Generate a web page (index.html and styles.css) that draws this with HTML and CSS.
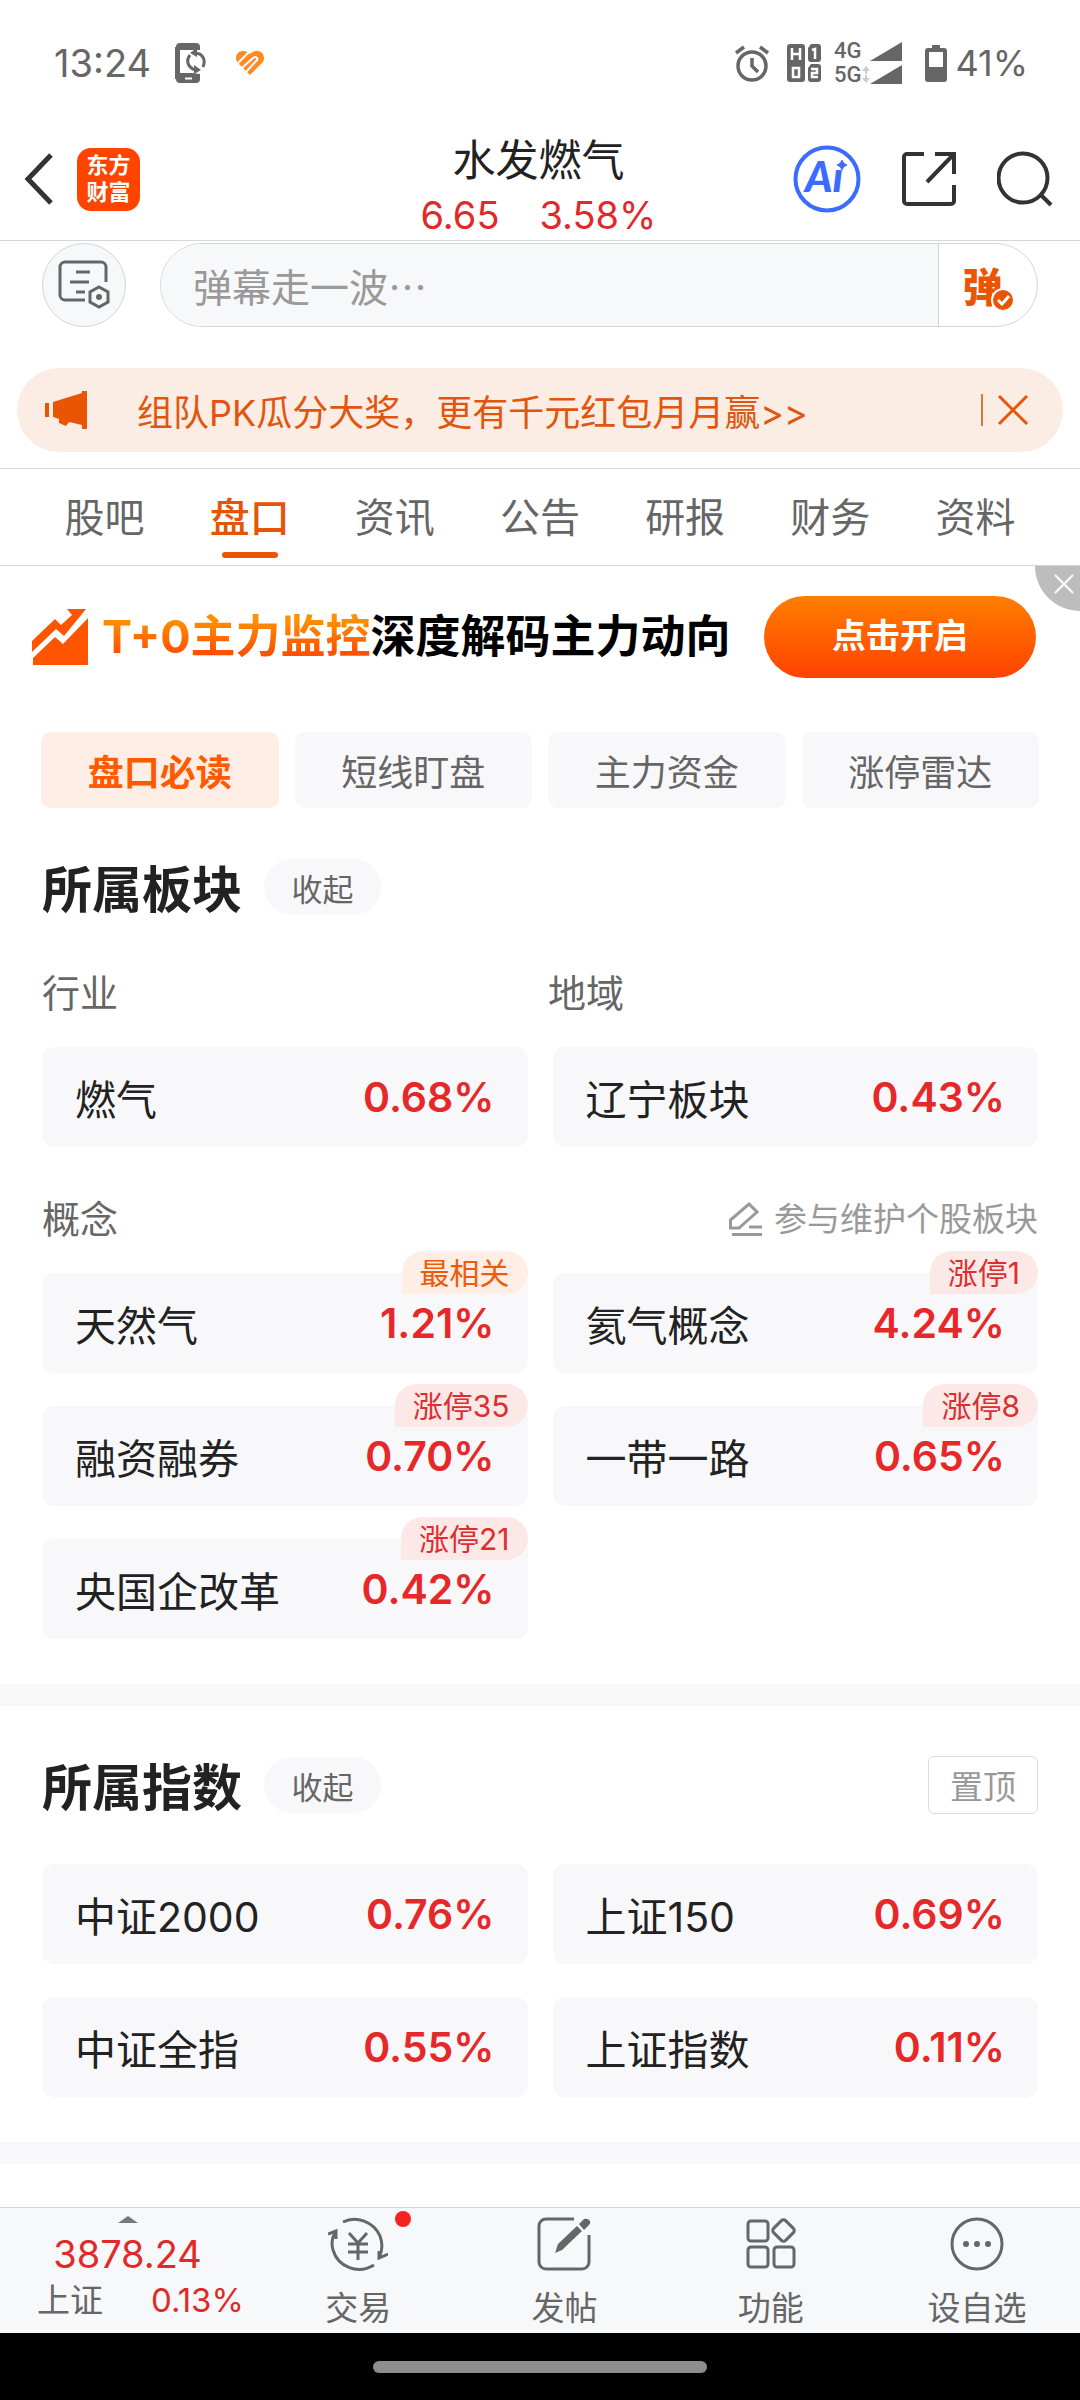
FILE: index.html
```html
<!DOCTYPE html>
<html lang="zh-CN">
<head>
  <meta charset="UTF-8">
  <meta name="viewport" content="width=device-width, initial-scale=1.0">
  <title>水发燃气</title>
  <link rel="stylesheet" href="styles.css">
</head>
<body>

  <div class="status-bar">
    <div class="status-left">
      <span class="clock">13:24</span>
      <svg width="32" height="42" viewBox="0 0 32 42">
        <path d="M5 1h16a4 4 0 0 1 4 4v3H5v23h12l8 1v5a4 4 0 0 1-4 4H5a4 4 0 0 1-4-4V5a4 4 0 0 1 4-4z" fill="#666"/>
        <path d="M1 5v32" stroke="#666" stroke-width="2"/>
        <path d="M10 36.500h7" stroke="#fff" stroke-width="2"/>
        <path d="M15 13c-4 5-3 12 5 15M21 11c7 1 10 7 7 14" fill="none" stroke="#666" stroke-width="3"/>
        <path d="M15 11l7-5v9zM26 28l-7 4v-9z" fill="#666"/>
      </svg>
      <svg class="heart" width="30" height="26" viewBox="0 0 30 26">
        <path d="M15 25L3 13C-1 9 1 1 8 1c3 0 5 1 7 3 2-2 4-3 7-3 7 0 9 8 5 12z" fill="#ff8a24"/>
        <path d="M2 14L15 1M7 18L18 8q3-2 4 0t-1 3L11 22" fill="none" stroke="#fff" stroke-width="2"/>
      </svg>
    </div>
    <div class="status-right">
      <svg width="36" height="38" viewBox="0 0 36 38">
        <circle cx="18" cy="22" r="14" fill="none" stroke="#666" stroke-width="3.500"/>
        <path d="M18 14v8l6 6M2 9l8-6M34 9l-8-6" fill="none" stroke="#666" stroke-width="3.500"/>
      </svg>
      <svg class="hd" width="36" height="40" viewBox="0 0 36 40">
        <rect x="1" y="1" width="18" height="38" rx="3" fill="#666"/>
        <path d="M25 1h7a3 3 0 0 1 3 3v12a3 3 0 0 1-3 3h-7a3 3 0 0 1-3-3V5zM25 21h7a3 3 0 0 1 3 3v12a3 3 0 0 1-3 3h-7a3 3 0 0 1-3-3V25z" fill="#666"/>
        <path d="M6 5v12M14 5v12M6 11h8M7 25h6v9H7zM26 7l3-1v10M25 26h6v4h-5v4h6" fill="none" stroke="#fff" stroke-width="2.500"/>
      </svg>
      <div class="network"><span>4G</span><span>5G</span></div>
      <svg width="42" height="42" viewBox="0 0 42 42">
        <path d="M41 0v19H9zM41 23v19H9z" fill="#666"/>
        <path d="M5 24l-4 5h3v3h2v-3h3zM5 41l-4-5h3v-3h2v3h3z" fill="#ccc"/>
      </svg>
      <svg class="battery" width="22" height="38" viewBox="0 0 22 38">
        <path d="M7 1h8v3h4a3 3 0 0 1 3 3v28a3 3 0 0 1-3 3H3a3 3 0 0 1-3-3V7a3 3 0 0 1 3-3h4z" fill="#666"/>
        <path d="M4 8h14v15H4z" fill="#fff"/>
      </svg>
      <span class="battery-text">41%</span>
    </div>
  </div>

  <header class="header">
    <div class="header-left">
      <button class="icon-button" aria-label="返回">
        <svg width="30" height="52" viewBox="0 0 30 52"><path d="M27 2L4 26l23 24" fill="none" stroke="#333" stroke-width="5"/></svg>
      </button>
      <a class="logo" href="#"><span>东方</span><span>财富</span></a>
    </div>
    <div class="stock">
      <h1>水发燃气</h1>
      <p class="stock-price"><span>6.65</span><span>3.58%</span></p>
    </div>
    <div class="header-right">
      <button class="icon-button" aria-label="智能助手">
        <svg width="68" height="68" viewBox="0 0 68 68">
          <circle cx="34" cy="34" r="31.500" fill="none" stroke="#3b6bff" stroke-width="4"/>
          <text class="ai-text" x="12" y="47">Aı</text>
          <path d="M49 15q1 4 5 5-4 1-5 5-1-4-5-5 4-1 5-5z" fill="#3b6bff" stroke="#3b6bff"/>
        </svg>
      </button>
      <button class="icon-button" aria-label="分享">
        <svg width="56" height="56" viewBox="0 0 56 56">
          <path d="M23 3H6a3 3 0 0 0-3 3v44a3 3 0 0 0 3 3h44a3 3 0 0 0 3-3V34M34 3h19v20M52 4L26 31" fill="none" stroke="#333" stroke-width="4"/>
        </svg>
      </button>
      <button class="icon-button" aria-label="搜索">
        <svg width="56" height="56" viewBox="0 0 56 56">
          <circle cx="26" cy="27" r="24.500" fill="none" stroke="#333" stroke-width="4"/>
          <path d="M43 43l11 11" stroke="#333" stroke-width="4"/>
        </svg>
      </button>
    </div>
  </header>

  <form class="danmu">
    <button type="button" class="danmu-setting" aria-label="弹幕设置">
      <svg width="52" height="50" viewBox="0 0 52 50">
        <path d="M27 40H7a5 5 0 0 1-5-5V7a5 5 0 0 1 5-5h36a5 5 0 0 1 5 5v15" fill="none" stroke="#666" stroke-width="3"/>
        <path d="M18 12h14M12 22h19M18 32h9" stroke="#666" stroke-width="3"/>
        <path d="M41 27l9 5v10l-9 5-9-5V32z" fill="#f7f8fa" stroke="#666" stroke-width="3"/>
        <circle cx="41" cy="37" r="3" fill="#666"/>
      </svg>
    </button>
    <div class="danmu-field">
      <input type="text" aria-label="弹幕" placeholder="弹幕走一波…">
      <button type="button" class="danmu-toggle">弹
        <svg class="danmu-check" width="24" height="24" viewBox="0 0 24 24">
          <circle cx="12" cy="12" r="11" fill="#ea5504" stroke="#fff" stroke-width="2"/>
          <path d="M7 12l4 4 7-8" fill="none" stroke="#fff" stroke-width="3"/>
        </svg>
      </button>
    </div>
  </form>

  <div class="notice">
    <svg width="44" height="38" viewBox="0 0 44 38"><path d="M1 12h4v14H1zM9 11l29-9V0h5v38h-5v-4l-13-3-3 4-7-3v-4l-6-2z" fill="#ea5504"/></svg>
    <a href="#">组队PK瓜分大奖，更有千元红包月月赢&gt;&gt;</a>
    <button class="notice-close" aria-label="关闭">
      <svg width="32" height="32" viewBox="0 0 32 32"><path d="M2 2l28 28M30 2L2 30" stroke="#ea5504" stroke-width="3"/></svg>
    </button>
  </div>

  <nav class="tabs">
    <a href="#">股吧</a>
    <a href="#" class="active">盘口</a>
    <a href="#">资讯</a>
    <a href="#">公告</a>
    <a href="#">研报</a>
    <a href="#">财务</a>
    <a href="#">资料</a>
  </nav>

  <div class="banner">
    <svg width="56" height="56" viewBox="0 0 56 56">
      <path d="M0 32L23 10l6 6 11-10-5-6h19L32 27l-8-7L0 43zM1 56v-7l22-21 8 7L56 9v47z" fill="#ff5500"/>
    </svg>
    <p class="banner-text"><span>T+0主力监控</span>深度解码主力动向</p>
    <a class="banner-button" href="#">点击开启</a>
    <button class="banner-close" aria-label="关闭广告">
      <svg width="20" height="20" viewBox="0 0 20 20"><path d="M1 1l18 18M19 1L1 19" stroke="#fff" stroke-width="2"/></svg>
    </button>
  </div>

  <div class="chips">
    <button class="active">盘口必读</button>
    <button>短线盯盘</button>
    <button>主力资金</button>
    <button>涨停雷达</button>
  </div>

  <section class="section">
    <div class="section-head">
      <h2>所属板块</h2>
      <button class="fold">收起</button>
    </div>
    <div class="labels labels-grid">
      <span>行业</span>
      <span>地域</span>
    </div>
    <div class="cards">
      <a class="card" href="#"><span>燃气</span><b>0.68%</b></a>
      <a class="card" href="#"><span>辽宁板块</span><b>0.43%</b></a>
    </div>
    <div class="labels labels-concept">
      <span>概念</span>
      <a class="maintain" href="#">
        <svg width="34" height="34" viewBox="0 0 34 34">
          <path d="M1.500 26V18L20 2l8 8-18 16zM20 25h13M3 32.500h30" fill="none" stroke="#999" stroke-width="3"/>
        </svg>
        参与维护个股板块
      </a>
    </div>
    <div class="cards">
      <a class="card" href="#"><span>天然气</span><b>1.21%</b><em class="badge related">最相关</em></a>
      <a class="card" href="#"><span>氦气概念</span><b>4.24%</b><em class="badge">涨停1</em></a>
      <a class="card" href="#"><span>融资融券</span><b>0.70%</b><em class="badge">涨停35</em></a>
      <a class="card" href="#"><span>一带一路</span><b>0.65%</b><em class="badge">涨停8</em></a>
      <a class="card" href="#"><span>央国企改革</span><b>0.42%</b><em class="badge">涨停21</em></a>
    </div>
  </section>

  <section class="section">
    <div class="section-head index-head">
      <h2>所属指数</h2>
      <button class="fold">收起</button>
      <button class="pin">置顶</button>
    </div>
    <div class="cards">
      <a class="card" href="#"><span>中证2000</span><b>0.76%</b></a>
      <a class="card" href="#"><span>上证150</span><b>0.69%</b></a>
      <a class="card" href="#"><span>中证全指</span><b>0.55%</b></a>
      <a class="card" href="#"><span>上证指数</span><b>0.11%</b></a>
    </div>
  </section>

  <footer class="bottom-bar">
    <a class="index-quote" href="#">
      <svg width="20" height="7" viewBox="0 0 20 7"><path d="M0 7L10 0l10 7z" fill="#77787d"/></svg>
      <span class="index-value">3878.24</span>
      <span class="index-change"><span>上证</span><b>0.13%</b></span>
    </a>
    <a class="bottom-item" href="#">
      <svg width="60" height="56" viewBox="0 0 60 56" fill="none" stroke="#666" stroke-width="3">
        <path d="M15 6C28-1 46 6 52 20c3 8 3 14-1 22M46 49C30 59 10 51 5 34c-2-7-1-13 3-19M0 18l8-3v8M60 38l-9 4v-7"/>
        <path d="M21 17l9 10 9-10M30 27v17M20 28h20M20 36h20"/>
      </svg>
      <span>交易</span>
      <i class="dot"></i>
    </a>
    <a class="bottom-item" href="#">
      <svg width="56" height="56" viewBox="0 0 56 56">
        <path d="M38 3H10a7 7 0 0 0-7 7v36a7 7 0 0 0 7 7h36a7 7 0 0 0 7-7V19" fill="none" stroke="#666" stroke-width="3"/>
        <path d="M19 37l3-9 19-18 5 5-20 19zM43 8l5-5q4-1 6 2 1 2-1 4l-5 5z" fill="#666"/>
      </svg>
      <span>发帖</span>
    </a>
    <a class="bottom-item" href="#">
      <svg width="52" height="56" viewBox="0 0 52 56" fill="none" stroke="#666" stroke-width="3">
        <rect x="3" y="5" width="20" height="20" rx="3"/>
        <rect x="3" y="31" width="20" height="20" rx="3"/>
        <rect x="29" y="31" width="20" height="20" rx="3"/>
        <rect x="30" y="6" width="17" height="17" rx="3" transform="rotate(45 38.500 14.500)"/>
      </svg>
      <span>功能</span>
    </a>
    <a class="bottom-item" href="#">
      <svg width="56" height="56" viewBox="0 0 56 56">
        <circle cx="28" cy="28" r="25" fill="none" stroke="#666" stroke-width="3"/>
        <circle cx="17" cy="28" r="3" fill="#666"/>
        <circle cx="28" cy="28" r="3" fill="#666"/>
        <circle cx="39" cy="28" r="3" fill="#666"/>
      </svg>
      <span>设自选</span>
    </a>
  </footer>
  <div class="system-nav"><div class="handle"></div></div>

</body>
</html>
```

FILE: styles.css
```css
* {
  box-sizing: border-box;
}
body {
  font-family: Inter, "Noto Sans CJK SC", sans-serif;
  margin: 0;
  min-height: 100vh;
  display: flex;
  flex-direction: column;
  background-color: #fff;
  color: #222;
}
h1, h2, p {
  margin: 0;
}
a {
  color: inherit;
  text-decoration: none;
}
button, input {
  font-family: inherit;
  border: none;
  padding: 0;
  background: none;
  color: inherit;
}
button {
  cursor: pointer;
}
svg {
  display: block;
  flex-shrink: 0;
}

/* Status bar */
.status-bar {
  display: flex;
  justify-content: space-between;
  align-items: center;
  height: 118px;
  padding: 8px 52px 0 54px;
  color: #666;
}
.status-left, .status-right {
  display: flex;
  align-items: center;
}
.status-left {
  gap: 24px;
  font-size: 38px;
}
.status-right {
  font-size: 36px;
}
.heart {
  margin-left: 4px;
}
.hd {
  margin: 0 12px 0 16px;
}
.network {
  display: flex;
  flex-direction: column;
  font-family: Roboto, sans-serif;
  font-size: 22px;
  font-weight: 500;
  line-height: 24px;
}
.battery {
  margin: 0 8px 0 22px;
}

/* Header */
.header {
  display: grid;
  grid-template-columns: 1fr auto 1fr;
  align-items: center;
  height: 123px;
  padding: 0 27px 0 24px;
  border-bottom: 1px solid #d3d6da;
}
.header-left, .header-right {
  display: flex;
  align-items: center;
}
.header-left {
  gap: 23px;
}
.header-right {
  justify-content: flex-end;
  gap: 40px;
}
.logo {
  display: flex;
  flex-direction: column;
  align-items: center;
  justify-content: center;
  width: 63px;
  height: 63px;
  border-radius: 14px;
  background-color: #ff4400;
  color: #fff;
  font-size: 22px;
  font-weight: 700;
  line-height: 27px;
}
.stock {
  align-self: end;
  text-align: center;
}
.stock h1 {
  font-size: 43px;
  font-weight: 400;
  line-height: 60px;
}
.stock-price {
  display: flex;
  justify-content: center;
  gap: 40px;
  color: #e02a2a;
  font-size: 38px;
  line-height: 50px;
}
.ai-text {
  font-family: Lato, sans-serif;
  font-size: 42px;
  font-style: italic;
  font-weight: 900;
  fill: #3b6bff;
}

/* Danmu input */
.danmu {
  display: flex;
  gap: 34px;
  padding: 2px 42px 0;
}
.danmu-setting {
  display: flex;
  align-items: center;
  justify-content: center;
  width: 84px;
  height: 84px;
  border: 1px solid #d3d6da;
  border-radius: 50%;
  background-color: #f7f8fa;
}
.danmu-field {
  flex: 1;
  display: flex;
  height: 84px;
  border: 1px solid #d3d6da;
  border-radius: 42px;
  overflow: hidden;
}
.danmu-field input {
  flex: 1;
  min-width: 0;
  padding-left: 32px;
  background-color: #f7f8fa;
  font-family: "Noto Sans CJK SC", sans-serif;
  font-size: 39px;
}
.danmu-field input::placeholder {
  color: #999;
}
.danmu-toggle {
  position: relative;
  width: 99px;
  padding-right: 11px;
  border-left: 1px solid #d3d6da;
  color: #ea5504;
  font-size: 40px;
  font-weight: 900;
}
.danmu-check {
  position: absolute;
  right: 22px;
  bottom: 14px;
}

/* Notice */
.notice {
  display: flex;
  align-items: center;
  height: 84px;
  margin: 41px 17px 16px;
  padding: 0 34px 0 27px;
  border-radius: 42px;
  background-color: #fcede4;
  color: #e0560e;
  font-size: 36px;
}
.notice a {
  flex: 1;
  margin-left: 49px;
}
.notice-close {
  padding-left: 14px;
  border-left: 2px solid #d9773e;
}

/* Tabs */
.tabs {
  display: flex;
  height: 98px;
  padding: 0 32px;
  border-top: 1px solid #d6d6d6;
  border-bottom: 1px solid #d6d6d6;
  color: #666;
  font-size: 40px;
}
.tabs a {
  position: relative;
  flex: 1;
  line-height: 98px;
  text-align: center;
}
.tabs .active {
  color: #e65505;
  font-weight: 500;
}
.tabs .active::after {
  content: "";
  position: absolute;
  bottom: 7px;
  left: 50%;
  width: 56px;
  height: 6px;
  margin-left: -28px;
  border-radius: 3px;
  background-color: #ea5504;
}

/* Banner */
.banner {
  position: relative;
  display: flex;
  align-items: center;
  height: 142px;
  padding: 0 44px 0 32px;
}
.banner-text {
  flex: 1;
  margin-left: 14px;
  color: #000;
  font-size: 45px;
  font-weight: 700;
  line-height: 64px;
}
.banner-text span {
  background: linear-gradient(#ff9000 20%, #ff5000 80%);
  -webkit-background-clip: text;
  background-clip: text;
  color: transparent;
}
.banner-button {
  width: 272px;
  height: 82px;
  border-radius: 41px;
  background: linear-gradient(#ff7e00, #ff4200);
  color: #fff;
  font-size: 34px;
  font-weight: 700;
  line-height: 80px;
  text-align: center;
}
.banner-close {
  position: absolute;
  top: 0;
  right: 0;
  display: flex;
  align-items: center;
  justify-content: center;
  width: 45px;
  height: 45px;
  padding: 0 0 10px 12px;
  border-bottom-left-radius: 45px;
  background-color: #bdbdbd;
}

/* Chips */
.chips {
  display: flex;
  gap: 16px;
  margin-top: 24px;
  padding: 0 41px;
}
.chips button {
  flex: 1;
  height: 76px;
  border-radius: 10px;
  background-color: #f8f8fa;
  color: #666;
  font-size: 36px;
}
.chips .active {
  background-color: #ffeee5;
  color: #ff5a00;
  font-weight: 700;
}

/* Sections */
.section {
  padding: 50px 42px 45px;
  border-bottom: 22px solid #f8f8fa;
}
.section-head {
  display: flex;
  align-items: center;
  height: 58px;
}
.index-head {
  margin-bottom: 50px;
}
.section-head h2 {
  padding-top: 6px;
  font-size: 50px;
  font-weight: 700;
  line-height: 58px;
}
.fold {
  width: 117px;
  height: 56px;
  margin-left: 22px;
  border-radius: 28px;
  background-color: #f8f8fa;
  color: #666;
  font-size: 31px;
}
.pin {
  width: 110px;
  height: 58px;
  margin-left: auto;
  border: 1px solid #ddd;
  border-radius: 6px;
  color: #999;
  font-size: 33px;
}
.labels {
  margin: 49px 0 26px;
  color: #666;
  font-size: 38px;
  line-height: 56px;
}
.labels-grid {
  display: grid;
  grid-template-columns: 1fr 1fr;
  gap: 16px;
}
.labels-concept {
  display: flex;
  justify-content: space-between;
  margin-top: 44px;
}
.maintain {
  display: flex;
  align-items: center;
  gap: 11px;
  color: #999;
  font-size: 33px;
}
.cards {
  display: grid;
  grid-template-columns: 1fr 1fr;
  gap: 33px 25px;
}
.card {
  position: relative;
  display: flex;
  align-items: center;
  justify-content: space-between;
  height: 100px;
  padding: 0 33px;
  border-radius: 12px;
  background-color: #f8f8fa;
  font-size: 41px;
}
.card b {
  color: #e62828;
  font-weight: 600;
}
.badge {
  position: absolute;
  top: -22px;
  right: 0;
  height: 43px;
  padding: 0 18px;
  border-radius: 22px 22px 22px 0;
  background-color: #fde8e8;
  color: #dc2e2e;
  font-size: 30px;
  font-style: normal;
  line-height: 44px;
}
.badge.related {
  background-color: #ffeee5;
  color: #f25a0a;
}

/* Bottom bar */
.bottom-bar {
  display: flex;
  height: 126px;
  margin-top: auto;
  border-top: 1px solid #d3d6da;
  background-color: #f7f8fa;
  color: #666;
  font-size: 33px;
}
.index-quote {
  display: flex;
  flex-direction: column;
  align-items: center;
  width: 255px;
  padding: 8px 0 0;
}
.index-value {
  margin-top: 7px;
  color: #e02a2a;
  font-size: 38px;
  line-height: 48px;
}
.index-change {
  display: flex;
  gap: 48px;
  margin-left: 26px;
  line-height: 44px;
}
.index-change b {
  color: #e02a2a;
  font-weight: 400;
}
.bottom-item {
  position: relative;
  flex: 1;
  display: flex;
  flex-direction: column;
  align-items: center;
  padding-top: 8px;
}
.bottom-item span {
  margin-top: 14px;
  line-height: 44px;
}
.dot {
  position: absolute;
  top: 3px;
  left: 50%;
  width: 16px;
  height: 16px;
  margin-left: 37px;
  border-radius: 50%;
  background-color: #f52222;
}

/* System navigation */
.system-nav {
  display: flex;
  align-items: center;
  justify-content: center;
  height: 67px;
  background-color: #000;
}
.handle {
  width: 31%;
  height: 12px;
  border-radius: 6px;
  background-color: #8e8e8e;
}
```
